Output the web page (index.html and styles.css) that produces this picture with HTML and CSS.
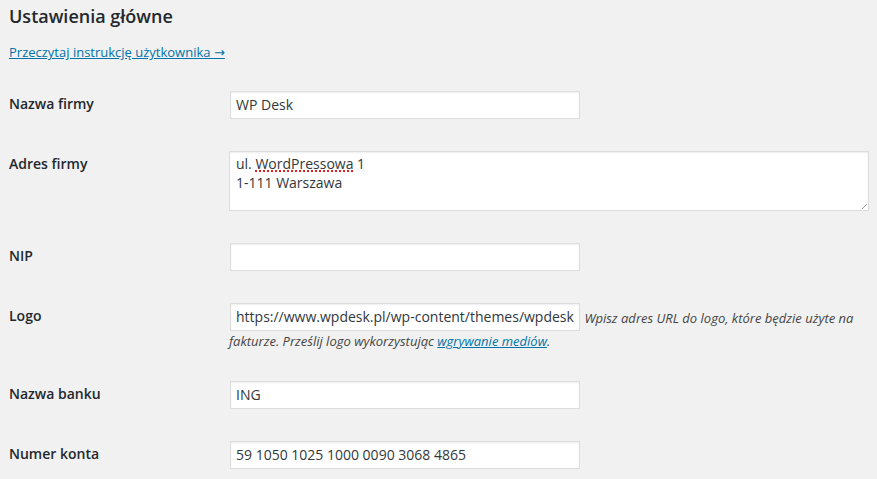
FILE: index.html
```html
<!DOCTYPE html>
<html lang="pl">
<head>
<meta charset="utf-8">
<title>Ustawienia główne</title>
<link rel="stylesheet" href="styles.css">
</head>
<body>
<div class="wrap">
  <h2 class="title">Ustawienia główne</h2>
  <p class="intro"><a href="#">Przeczytaj instrukcję użytkownika <span class="arrow">→</span></a></p>
  <table class="form-table">
    <tbody>
      <tr>
        <th>Nazwa firmy</th>
        <td><input class="regular-text" type="text" value="WP Desk"></td>
      </tr>
      <tr>
        <th>Adres firmy</th>
        <td>
          <div class="textarea" role="textbox" aria-multiline="true">ul. <span class="spell">WordPressowa</span> 1<br>1-111 Warszawa<span class="grip"></span></div>
        </td>
      </tr>
      <tr>
        <th>NIP</th>
        <td><input class="regular-text" type="text" value=""></td>
      </tr>
      <tr>
        <th>Logo</th>
        <td><input class="regular-text" type="text" value="https://www.wpdesk.pl/wp-content/themes/wpdesk/img/logo.png"> <span class="description">Wpisz adres URL do logo, które będzie użyte na fakturze. Prześlij logo wykorzystując <a href="#">wgrywanie mediów</a>.</span></td>
      </tr>
      <tr>
        <th>Nazwa banku</th>
        <td><input class="regular-text" type="text" value="ING"></td>
      </tr>
      <tr>
        <th>Numer konta</th>
        <td><input class="regular-text" type="text" value="59 1050 1025 1000 0090 3068 4865"></td>
      </tr>
    </tbody>
  </table>
</div>
</body>
</html>
```

FILE: styles.css
```css
html, body {
  margin: 0;
  padding: 0;
  background: #f1f1f1;
}

body {
  font-family: "Open Sans", "Noto Sans", "Liberation Sans", sans-serif;
  font-size: 13px;
  line-height: 1.4;
  color: #444;
}

.wrap {
  padding: 0 0 0 9px;
}

.title {
  margin: 5px 0 0;
  font-size: 18px;
  font-weight: 600;
  line-height: 1.3;
  color: #23282d;
}

.intro {
  margin: 15px 0 0;
  font-size: 13px;
  line-height: 1.5;
}

.arrow {
  font-family: "DejaVu Sans", sans-serif;
  font-size: 13px;
}

a {
  color: #0073aa;
  text-decoration: underline;
}

.form-table {
  margin-top: 12px;
  border-collapse: collapse;
}

.form-table th {
  width: 200px;
  min-width: 200px;
  padding: 20px 10px 20px 0;
  text-align: left;
  vertical-align: top;
  font-size: 14px;
  font-weight: 600;
  line-height: 1.3;
  color: #23282d;
}

.form-table td {
  padding: 15px 10px;
  vertical-align: top;
  font-size: 13px;
  line-height: 18px;
}

.regular-text {
  box-sizing: border-box;
  width: 350px;
  height: 28px;
  margin: 1px;
  padding: 3px 5px;
  border: 1px solid #ddd;
  background: #fff;
  box-shadow: inset 0 1px 2px rgba(0, 0, 0, .07);
  font-family: inherit;
  font-size: 14px;
  line-height: 20px;
  color: #32373c;
  outline: none;
}

.textarea {
  position: relative;
  box-sizing: border-box;
  width: 640px;
  height: 60px;
  margin: 1px 0;
  padding: 2px 6px;
  border: 1px solid #ddd;
  background: #fff;
  box-shadow: inset 0 1px 2px rgba(0, 0, 0, .07);
  font-size: 14px;
  line-height: 1.4;
  color: #32373c;
}

.spell {
  text-decoration: underline dotted #e02020;
  text-decoration-thickness: 2px;
  text-underline-offset: 2px;
}

.grip {
  position: absolute;
  right: 1px;
  bottom: 1px;
  width: 10px;
  height: 10px;
  background: repeating-linear-gradient(135deg, transparent 0 2px, #999 2px 3px, transparent 3px 4px);
  clip-path: polygon(100% 0, 100% 100%, 0 100%);
}

.description {
  font-style: italic;
  font-size: 13px;
  color: #444;
}
```
